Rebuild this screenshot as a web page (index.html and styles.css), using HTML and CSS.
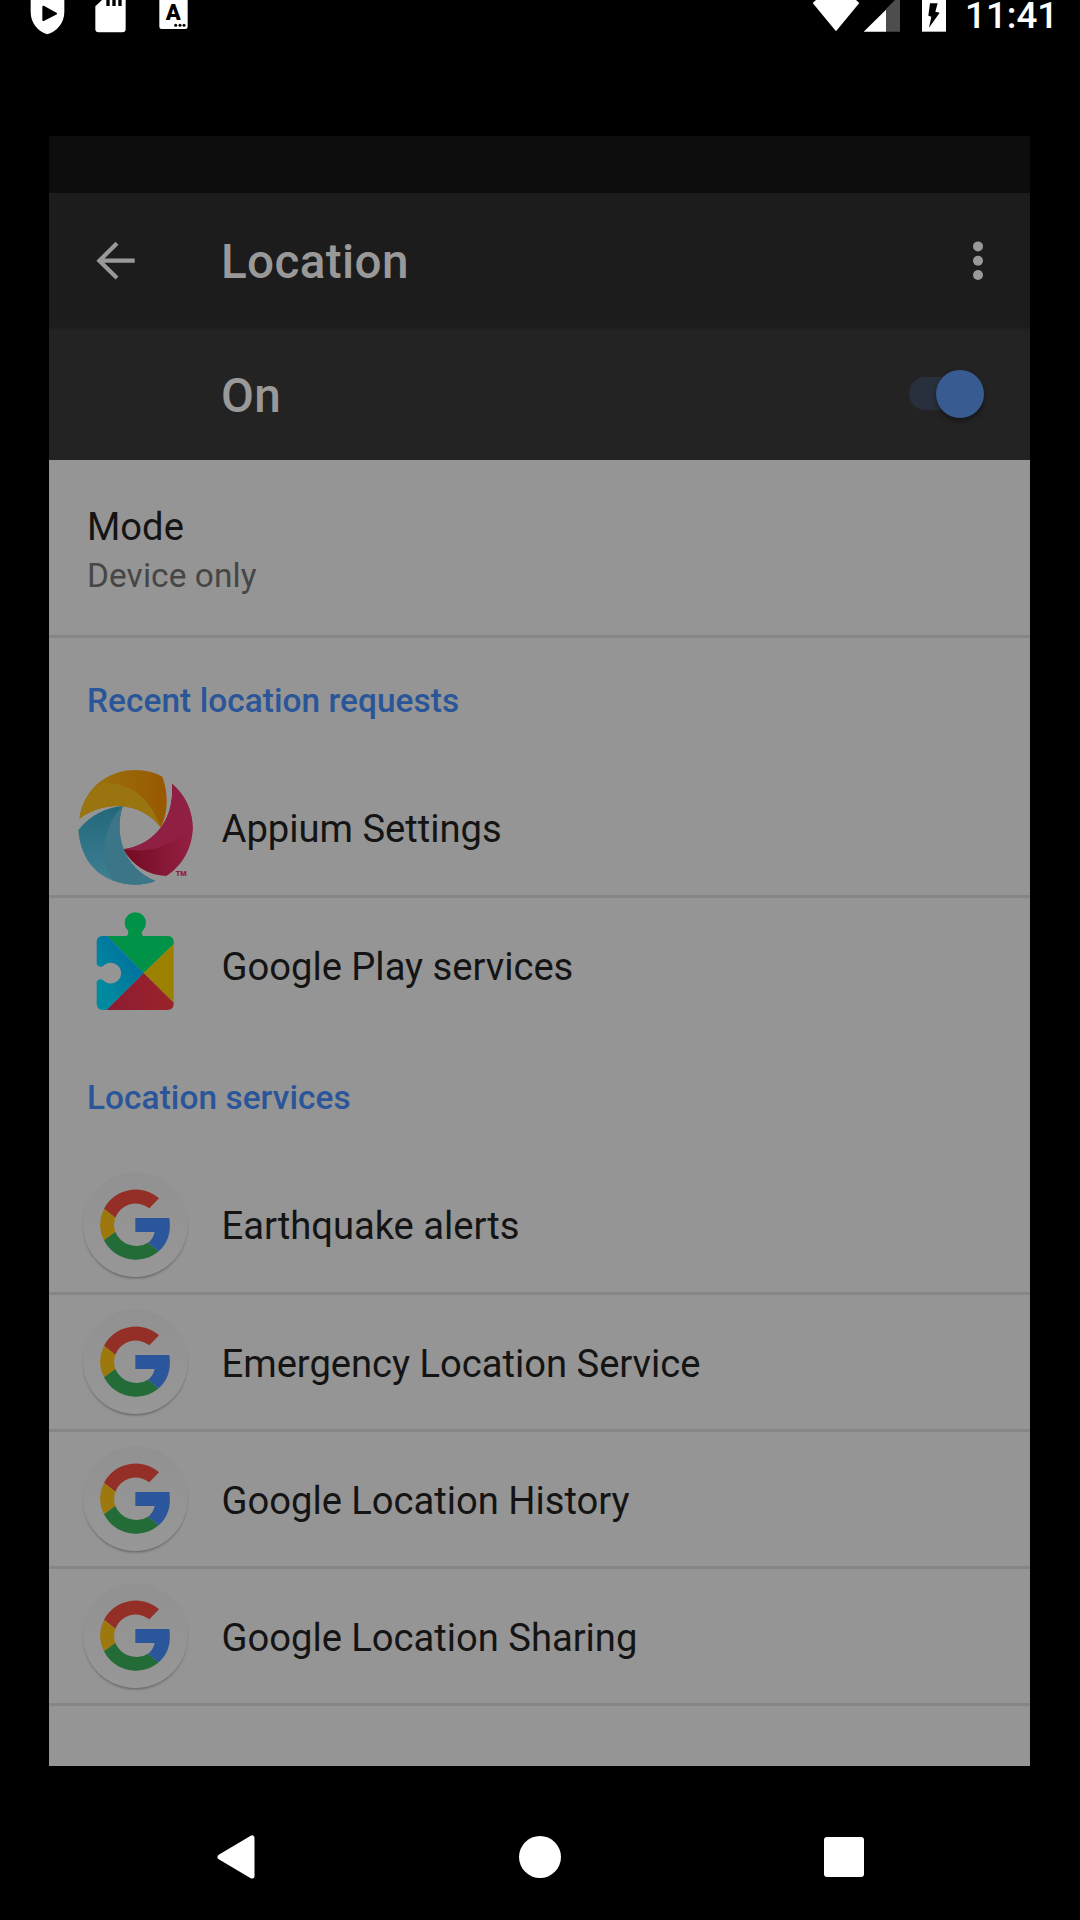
FILE: index.html
```html
<!DOCTYPE html>
<html lang="en">
<head>
<meta charset="utf-8">
<title>Location</title>
<link rel="stylesheet" href="styles.css">
</head>
<body>
<svg class="defs" width="0" height="0" aria-hidden="true">
  <defs>
    <linearGradient id="disc" x1="0" y1="0" x2="0" y2="1"><stop offset="0" stop-color="#919191"/><stop offset="1" stop-color="#979797"/></linearGradient>
    <filter id="soft" x="-20%" y="-20%" width="140%" height="140%"><feGaussianBlur stdDeviation="3"/></filter>
    <symbol id="google" viewBox="51 24 351 411">
      <circle cx="226" cy="230" r="155" fill="#666" filter="url(#soft)"/>
      <circle cx="226" cy="224" r="157" fill="url(#disc)"/>
      <path d="M297 145A107 107 0 0 0 132 176L166 203A65 65 0 0 1 268 175Z" fill="#932f27"/>
      <path d="M132 176A107 107 0 0 0 132 271L166 246A65 65 0 0 1 166 203Z" fill="#9c780d"/>
      <path d="M132 271A107 107 0 0 0 296 304L264 278A68 68 0 0 1 166 246Z" fill="#236b37"/>
      <path d="M226 204H328C334 246 324 281 296 304L264 278Q280 267 284 246H226Z" fill="#2b569b"/>
    </symbol>
  </defs>
</svg>
<div class="screen">
  <header class="status">
    <svg width="240" height="60" viewBox="0 0 720 180">
      <path d="M92 0H193V35C193 70 170 94 142 103C114 94 92 70 92 35Z" fill="#fff"/>
      <path d="M130 20L168 41L130 60Z" stroke="#000" stroke-width="6" stroke-linejoin="round"/>
      <path d="M306 0H377V87Q377 97 367 97H296Q286 97 286 87V19Z" fill="#fff"/>
      <path d="M319 0H329V18H319ZM337 0H347V18H337ZM355 0H365V18H355Z"/>
      <path d="M478 0H563V80Q563 87 556 87H485Q478 87 478 80Z" fill="#fff"/>
      <text x="520" y="61" class="autofill-letter">A</text>
      <circle cx="527" cy="76" r="4.5"/><circle cx="540" cy="76" r="4.5"/><circle cx="552" cy="76" r="4.5"/>
    </svg>
    <div class="status-end">
      <svg width="150" height="60" viewBox="90 0 450 180">
        <path d="M98 9L108 0H228L238 9L168 94Z" fill="#fff"/>
        <path d="M345 0H360V95H317V28Z" fill="#4d4d4d"/>
        <path d="M318 29V95H251Z" fill="#fff"/>
        <path d="M426 0H498V95H426Z" fill="#fff"/>
        <path d="M450 10H473L466 35L479 38L447 83L454 50L445 47Z"/>
      </svg>
      <time class="clock">11:41</time>
    </div>
  </header>

  <main class="panel">
    <div class="panel-top"></div>
    <div class="toolbar">
      <svg class="back" width="58" height="58" viewBox="142 334 174 174"><path d="M232 368L179 420L232 472M180 420H285" fill="none" stroke="#999" stroke-width="12.5"/></svg>
      <h1 class="title">Location</h1>
      <svg class="more" width="12" height="42" viewBox="0 0 12 42"><g fill="#999"><circle cx="6" cy="6.4" r="5"/><circle cx="6" cy="20.7" r="5"/><circle cx="6" cy="35" r="5"/></g></svg>
    </div>
    <div class="switch-bar">
      <span class="title">On</span>
      <span class="track"><span class="thumb"></span></span>
    </div>
    <section class="mode">
      <span class="label">Mode</span>
      <span class="summary">Device only</span>
    </section>

    <h2 class="category">Recent location requests</h2>
    <ul class="list">
      <li class="row">
        <svg width="117" height="137" viewBox="51 33 351 411">
          <defs>
            <linearGradient id="or" x1="0" x2="1"><stop offset=".2" stop-color="#9b700d"/><stop offset="1" stop-color="#985800"/></linearGradient>
            <linearGradient id="pk" x1="0" x2="1"><stop offset="0" stop-color="#720b20"/><stop offset="1" stop-color="#942044"/></linearGradient>
            <linearGradient id="bl" x1="0" x2="0" y1="0" y2="1"><stop offset="0" stop-color="#22687b"/><stop offset="1" stop-color="#408093"/></linearGradient>
          </defs>
          <path d="M58 206C72 112 145 60 226 60Q274 61 307 80C324 125 327 187 302 232C255 167 150 140 58 206Z" fill="url(#or)"/>
          <path d="M58 206C66 155 92 121 126 99C202 96 270 135 302 232C255 167 150 140 58 206Z" fill="#9a740e"/>
          <path d="M336 101C374 133 398 181 398 234C398 294 366 348 319 378C265 377 219 349 190 298C267 287 345 225 336 101Z" fill="url(#pk)"/>
          <path d="M336 101C374 133 398 181 398 234L395 258Q382 254 352 265C305 298 254 308 190 298C267 287 345 225 336 101Z" fill="#8f2043"/>
          <path d="M188 169C161 251 190 354 286 393C244 409 195 407 157 391C95 367 60 312 55 240C90 197 139 171 188 169Z" fill="url(#bl)"/>
          <path d="M188 169C161 251 190 354 286 393C244 409 195 407 157 391C120 326 127 228 188 169Z" fill="#3b7587"/>
          <text x="347" y="379" class="trademark" textLength="33" lengthAdjust="spacingAndGlyphs">TM</text>
        </svg>
        <span class="label">Appium Settings</span>
      </li>
      <li class="row row-last">
        <svg width="117" height="137" viewBox="51 24 351 411">
          <defs><linearGradient id="cy" x1="0" y1="1" x2="1" y2="0"><stop offset=".2" stop-color="#008a9e"/><stop offset="1" stop-color="#00689f"/></linearGradient>
          <linearGradient id="rd" x1="0" x2="1"><stop offset="0" stop-color="#8d1a33"/><stop offset="1" stop-color="#9b2429"/></linearGradient></defs>
          <path d="M142 138H200Q208 132 203 121A32 32 0 1 1 249 121Q241 131 249 138H324Q341 140 341 156V162L251 249Z" fill="#009246"/>
          <path d="M341 162V338L251 249Z" fill="#9a8100"/>
          <path d="M251 249L341 338V343Q339 360 323 360H139Z" fill="url(#rd)"/>
          <path d="M142 138H127Q110 140 110 156V222Q116 234 129 229A31 31 0 1 1 129 270Q116 263 110 275V343Q112 359 127 360H139L251 249Z" fill="url(#cy)"/>
        </svg>
        <span class="label">Google Play services</span>
      </li>
    </ul>

    <h2 class="category">Location services</h2>
    <ul class="list">
      <li class="row"><svg width="117" height="137"><use href="#google"/></svg><span class="label">Earthquake alerts</span></li>
      <li class="row"><svg width="117" height="137"><use href="#google"/></svg><span class="label">Emergency Location Service</span></li>
      <li class="row"><svg width="117" height="137"><use href="#google"/></svg><span class="label">Google Location History</span></li>
      <li class="row"><svg width="117" height="137"><use href="#google"/></svg><span class="label">Google Location Sharing</span></li>
    </ul>
  </main>

  <nav class="navbar">
    <svg width="46" height="46" viewBox="0 0 46 46"><path d="M6 23L38 4V42Z" fill="#fff" stroke="#fff" stroke-width="5" stroke-linejoin="round"/></svg>
    <span class="home"></span>
    <span class="recents"></span>
  </nav>
</div>
</body>
</html>
```
FILE: styles.css
```css
* { box-sizing: border-box; }
body {
  margin: 0;
  background: #000;
  font-family: Roboto, "Liberation Sans", sans-serif;
}
svg { display: block; flex: none; }
.defs { position: absolute; }
.screen {
  width: 1080px;
  height: 1920px;
  display: flex;
  flex-direction: column;
  background: #000;
  overflow: hidden;
}
.status {
  height: 136px;
  display: flex;
  justify-content: space-between;
  align-items: flex-start;
}
.status-end {
  display: flex;
  width: 270px;
  color: #fff;
}
.clock {
  margin-left: 5px;
  font-size: 36.75px;
  line-height: 31px;
  font-weight: 500;
}
.autofill-letter {
  font-size: 66px;
  font-weight: 900;
  text-anchor: middle;
}
.trademark {
  font-size: 19px;
  font-weight: 900;
  fill: #8f2043;
}
.panel {
  width: 981px;
  height: 1630px;
  margin-left: 49px;
  background: #959595;
}
.panel-top { height: 57px; background: #0d0d0d; }
.toolbar {
  height: 139px;
  display: flex;
  align-items: center;
  padding: 0 46px 0 38px;
  background: linear-gradient(#1c1c1c, #1c1c1c 133px, #232323);
}
.back { margin-top: -4px; }
.title {
  margin: 0;
  color: #999;
  font-size: 47.7px;
  line-height: 56px;
  font-weight: 500;
  letter-spacing: .35px;
}
.toolbar .title { margin: -1px 0 0 76px; }
.more { margin: -4px 0 0 auto; }
.switch-bar {
  height: 128px;
  display: flex;
  align-items: center;
  justify-content: space-between;
  padding: 0 46px 0 172px;
  background: #232323;
}
.track {
  width: 75px;
  height: 33px;
  margin-top: -5px;
  display: flex;
  align-items: center;
  justify-content: flex-end;
  border-radius: 17px;
  background: linear-gradient(90deg, #28303d 60px, transparent 60px);
}
.thumb {
  width: 48px;
  height: 48px;
  border-radius: 50%;
  background: #385b92;
  box-shadow: 0 3px 5px rgba(0, 0, 0, .4);
  flex: none;
}
.mode {
  height: 178px;
  padding: 42px 38px 0;
  display: flex;
  flex-direction: column;
  border-bottom: 3px solid #868686;
}
.label {
  color: #141414;
  font-size: 38.2px;
  line-height: 50px;
}
.summary {
  color: #464646;
  font-size: 33.4px;
  line-height: 47px;
  letter-spacing: .1px;
}
.category {
  height: 123px;
  margin: 0;
  padding: 2px 38px 0;
  display: flex;
  align-items: center;
  color: #2a5599;
  font-size: 33.4px;
  font-weight: 500;
  letter-spacing: .06px;
}
.list { list-style: none; margin: 0; padding: 0; }
.row {
  height: 137px;
  display: flex;
  align-items: center;
  gap: 27.5px;
  padding-left: 28px;
  box-shadow: inset 0 -3px #868686;
}
.row .label { letter-spacing: -.03px; }
.row:first-child .label { margin-top: -1px; }
.row-last { box-shadow: none; }
.navbar {
  flex: 1;
  display: flex;
  align-items: center;
  justify-content: space-between;
  padding: 28px 216px 0 214px;
}
.home {
  width: 42px;
  height: 42px;
  margin-right: 5px;
  border-radius: 50%;
  background: #fff;
}
.recents {
  width: 40px;
  height: 40px;
  border-radius: 3px;
  background: #fff;
}
```
